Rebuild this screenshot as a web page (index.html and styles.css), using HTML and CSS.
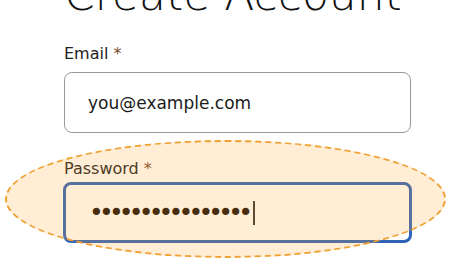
FILE: index.html
```html
<!DOCTYPE html>
<html>
<head>
<meta charset="utf-8">
<link rel="stylesheet" href="styles.css">
</head>
<body>
<main class="page">
  <h1 class="title">Create Account</h1>
  <div class="field">
    <label class="label">Email <span class="req">*</span></label>
    <div class="input">you@example.com</div>
  </div>
  <div class="field">
    <label class="label">Password <span class="req">*</span></label>
    <div class="input input-focus"><span class="dots">••••••••••••••••</span><span class="caret"></span></div>
  </div>
</main>
<div class="highlight"></div>
</body>
</html>
```
FILE: styles.css
```css
html, body {
  margin: 0;
  padding: 0;
  background: #ffffff;
  overflow: hidden;
}
body {
  width: 474px;
  height: 266px;
  position: relative;
  font-family: "DejaVu Sans", "Noto Sans", sans-serif;
  color: #1c1c1c;
}
.page {
  padding-left: 64px;
  width: 347px;
}
.title {
  margin: -27px 0 0 0;
  font-size: 44px;
  line-height: 44px;
  font-weight: 300;
  letter-spacing: 0;
  color: #111;
  white-space: nowrap;
}
.field {
  display: flex;
  flex-direction: column;
}
.field + .field {
  margin-top: 26px;
}
.label {
  margin-top: 27px;
  font-size: 16px;
  line-height: 20px;
  color: #222;
}
.field + .field .label {
  margin-top: 0;
}
.req {
  color: #7a4a2a;
}
.input {
  margin-top: 8px;
  box-sizing: border-box;
  height: 61px;
  border: 1px solid #9a9a9a;
  border-radius: 8px;
  padding: 0 23px;
  display: flex;
  align-items: center;
  font-size: 17px;
  color: #1a1a1a;
}
.input-focus {
  margin-top: 3px;
  width: 349px;
  margin-left: -1px;
  border: 3px solid #2f63b8;
  padding-left: 23px;
}
.dots {
  font-size: 25px;
  letter-spacing: -4.8px;
  color: #1a0f05;
}
.caret {
  display: inline-block;
  width: 1.5px;
  height: 24px;
  background: #333;
  margin-left: 5px;
}
.highlight {
  position: absolute;
  left: 5px;
  top: 140px;
  width: 441px;
  height: 118px;
  box-sizing: border-box;
  border: 2px dashed #f0a030;
  border-radius: 50%;
  background: rgba(255, 166, 50, 0.2);
  pointer-events: none;
}
```
